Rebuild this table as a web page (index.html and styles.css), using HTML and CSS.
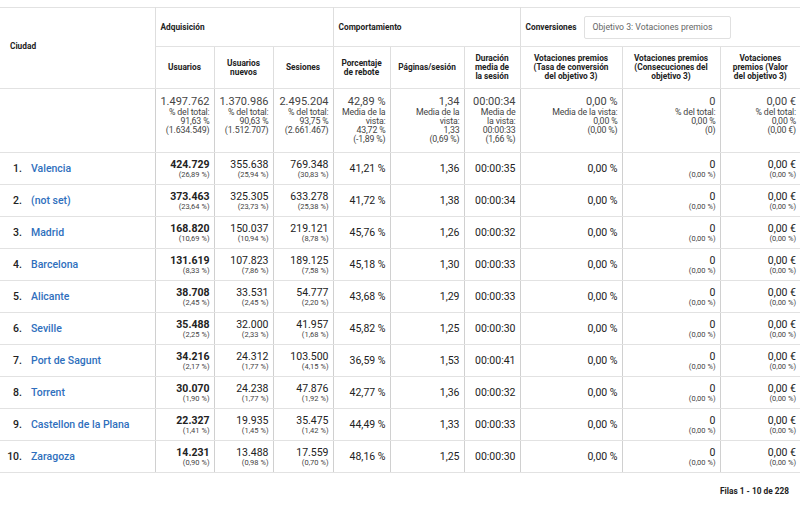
FILE: index.html
```html
<!DOCTYPE html>
<html lang="es">
<head>
<meta charset="utf-8">
<title>Ciudad</title>
<link rel="stylesheet" href="styles.css">
</head>
<body>
<div class="page">
<table class="report">
  <colgroup>
    <col class="c-city"><col class="c-u"><col class="c-un"><col class="c-s"><col class="c-pr"><col class="c-ps"><col class="c-dm"><col class="c-tc"><col class="c-co"><col class="c-vo">
  </colgroup>
  <thead>
    <tr class="h1">
      <th rowspan="2" class="city-h">Ciudad</th>
      <th colspan="3" class="grp">Adquisición</th>
      <th colspan="3" class="grp">Comportamiento</th>
      <th colspan="3" class="grp"><div class="conv"><span>Conversiones</span><div class="select">Objetivo 3: Votaciones premios</div></div></th>
    </tr>
    <tr class="h2">
      <th>Usuarios</th>
      <th>Usuarios<br>nuevos</th>
      <th>Sesiones</th>
      <th>Porcentaje<br>de rebote</th>
      <th>Páginas/sesión</th>
      <th>Duración<br>media de<br>la sesión</th>
      <th>Votaciones premios<br>(Tasa de conversión<br>del objetivo 3)</th>
      <th>Votaciones premios<br>(Consecuciones del<br>objetivo 3)</th>
      <th>Votaciones<br>premios (Valor<br>del objetivo 3)</th>
    </tr>
  </thead>
  <tbody>
    <tr class="totals">
      <td></td>
      <td><div class="tv">1.497.762</div><div class="ts">% del total:<br>91,63 %<br>(1.634.549)</div></td>
      <td><div class="tv">1.370.986</div><div class="ts">% del total:<br>90,63 %<br>(1.512.707)</div></td>
      <td><div class="tv">2.495.204</div><div class="ts">% del total:<br>93,75 %<br>(2.661.467)</div></td>
      <td><div class="tv">42,89 %</div><div class="ts">Media de la<br>vista:<br>43,72 %<br>(-1,89 %)</div></td>
      <td><div class="tv">1,34</div><div class="ts">Media de la<br>vista:<br>1,33<br>(0,69 %)</div></td>
      <td><div class="tv">00:00:34</div><div class="ts">Media de<br>la vista:<br>00:00:33<br>(1,66 %)</div></td>
      <td><div class="tv">0,00 %</div><div class="ts">Media de la vista:<br>0,00 %<br>(0,00 %)</div></td>
      <td><div class="tv">0</div><div class="ts">% del total:<br>0,00 %<br>(0)</div></td>
      <td><div class="tv">0,00 €</div><div class="ts">% del total:<br>0,00 %<br>(0,00 €)</div></td>
    </tr>
    <tr><td class="city"><span class="rk">1.</span><a href="#">Valencia</a></td><td><b>424.729</b><small>(26,89 %)</small></td><td>355.638<small>(25,94 %)</small></td><td>769.348<small>(30,83 %)</small></td><td>41,21 %</td><td>1,36</td><td>00:00:35</td><td>0,00 %</td><td>0<small>(0,00 %)</small></td><td>0,00 €<small>(0,00 %)</small></td></tr>
    <tr><td class="city"><span class="rk">2.</span><a href="#">(not set)</a></td><td><b>373.463</b><small>(23,64 %)</small></td><td>325.305<small>(23,73 %)</small></td><td>633.278<small>(25,38 %)</small></td><td>41,72 %</td><td>1,38</td><td>00:00:34</td><td>0,00 %</td><td>0<small>(0,00 %)</small></td><td>0,00 €<small>(0,00 %)</small></td></tr>
    <tr><td class="city"><span class="rk">3.</span><a href="#">Madrid</a></td><td><b>168.820</b><small>(10,69 %)</small></td><td>150.037<small>(10,94 %)</small></td><td>219.121<small>(8,78 %)</small></td><td>45,76 %</td><td>1,26</td><td>00:00:32</td><td>0,00 %</td><td>0<small>(0,00 %)</small></td><td>0,00 €<small>(0,00 %)</small></td></tr>
    <tr><td class="city"><span class="rk">4.</span><a href="#">Barcelona</a></td><td><b>131.619</b><small>(8,33 %)</small></td><td>107.823<small>(7,86 %)</small></td><td>189.125<small>(7,58 %)</small></td><td>45,18 %</td><td>1,30</td><td>00:00:33</td><td>0,00 %</td><td>0<small>(0,00 %)</small></td><td>0,00 €<small>(0,00 %)</small></td></tr>
    <tr><td class="city"><span class="rk">5.</span><a href="#">Alicante</a></td><td><b>38.708</b><small>(2,45 %)</small></td><td>33.531<small>(2,45 %)</small></td><td>54.777<small>(2,20 %)</small></td><td>43,68 %</td><td>1,29</td><td>00:00:33</td><td>0,00 %</td><td>0<small>(0,00 %)</small></td><td>0,00 €<small>(0,00 %)</small></td></tr>
    <tr><td class="city"><span class="rk">6.</span><a href="#">Seville</a></td><td><b>35.488</b><small>(2,25 %)</small></td><td>32.000<small>(2,33 %)</small></td><td>41.957<small>(1,68 %)</small></td><td>45,82 %</td><td>1,25</td><td>00:00:30</td><td>0,00 %</td><td>0<small>(0,00 %)</small></td><td>0,00 €<small>(0,00 %)</small></td></tr>
    <tr><td class="city"><span class="rk">7.</span><a href="#">Port de Sagunt</a></td><td><b>34.216</b><small>(2,17 %)</small></td><td>24.312<small>(1,77 %)</small></td><td>103.500<small>(4,15 %)</small></td><td>36,59 %</td><td>1,53</td><td>00:00:41</td><td>0,00 %</td><td>0<small>(0,00 %)</small></td><td>0,00 €<small>(0,00 %)</small></td></tr>
    <tr><td class="city"><span class="rk">8.</span><a href="#">Torrent</a></td><td><b>30.070</b><small>(1,90 %)</small></td><td>24.238<small>(1,77 %)</small></td><td>47.876<small>(1,92 %)</small></td><td>42,77 %</td><td>1,36</td><td>00:00:32</td><td>0,00 %</td><td>0<small>(0,00 %)</small></td><td>0,00 €<small>(0,00 %)</small></td></tr>
    <tr><td class="city"><span class="rk">9.</span><a href="#">Castellon de la Plana</a></td><td><b>22.327</b><small>(1,41 %)</small></td><td>19.935<small>(1,45 %)</small></td><td>35.475<small>(1,42 %)</small></td><td>44,49 %</td><td>1,33</td><td>00:00:33</td><td>0,00 %</td><td>0<small>(0,00 %)</small></td><td>0,00 €<small>(0,00 %)</small></td></tr>
    <tr><td class="city"><span class="rk">10.</span><a href="#">Zaragoza</a></td><td><b>14.231</b><small>(0,90 %)</small></td><td>13.488<small>(0,98 %)</small></td><td>17.559<small>(0,70 %)</small></td><td>48,16 %</td><td>1,25</td><td>00:00:30</td><td>0,00 %</td><td>0<small>(0,00 %)</small></td><td>0,00 €<small>(0,00 %)</small></td></tr>
  </tbody>
</table>
<div class="footer">Filas 1 - 10 de 228</div>
</div>
</body>
</html>
```
FILE: styles.css
```css
* { box-sizing: border-box; }
html, body { margin: 0; padding: 0; background: #fff; }
body { font-family: Roboto, "Liberation Sans", Arial, sans-serif; color: #222; overflow: hidden; }
.page { width: 800px; padding-top: 7px; }

.report { border-collapse: collapse; table-layout: fixed; width: 800px; }
.c-city { width: 155px; }
.c-u { width: 59px; }
.c-un { width: 59px; }
.c-s { width: 60px; }
.c-pr { width: 57px; }
.c-ps { width: 74px; }
.c-dm { width: 56px; }
.c-tc { width: 102px; }
.c-co { width: 98px; }
.c-vo { width: 80px; }

.report th, .report td { border: 1px solid #e2e2e2; padding: 0; }
.report tr > :first-child { border-left: none; }
.report tr > :last-child { border-right: none; }
.report td { border-left-color: #d0d0d0; border-right-color: #d0d0d0; }
.report th { border-left-color: #dedede; border-right-color: #dedede; }

.report th { font-size: 8.3px; font-weight: 700; line-height: 9px; color: #222; white-space: nowrap; }
.h1 { height: 39px; }
.h2 { height: 42px; }
.city-h { text-align: left; padding-left: 10px !important; padding-bottom: 3px !important; }
.grp { text-align: left; padding-left: 5px !important; }
.conv { display: flex; align-items: center; gap: 8px; }
.select { border: 1px solid #e0e0e0; border-radius: 2px; height: 23px; width: 147px; display: flex; align-items: center; padding-left: 7px; font-weight: 400; color: #666; font-size: 8.7px; }
.h2 th { text-align: center; padding: 0 2px; }

.totals { height: 64px; }
.totals td { text-align: right; vertical-align: top; padding: 7px 4px 0 2px; color: #444; white-space: nowrap; }
.tv { font-size: 11px; line-height: 12px; }
.ts { font-size: 8.8px; line-height: 9px; letter-spacing: -0.15px; }

.report tbody tr:not(.totals) { height: 32px; }
.report tbody tr:not(.totals) td { text-align: right; padding: 0 4px; font-size: 10.5px; line-height: 11px; vertical-align: middle; color: #222; }
.report tbody td b { font-weight: 700; }
.report tbody td small { display: block; font-size: 7.5px; line-height: 9px; color: #444; }
.report tbody tr:not(.totals) td.city { text-align: left; padding-left: 0; font-weight: 500; }
.rk { display: inline-block; width: 22px; text-align: right; font-weight: 500; color: #222; }
.city a { margin-left: 9px; color: #2f6fbd; text-decoration: none; font-weight: 500; }

.footer { text-align: right; padding: 13px 11px 0 0; font-size: 8.3px; font-weight: 700; color: #222; }
```
